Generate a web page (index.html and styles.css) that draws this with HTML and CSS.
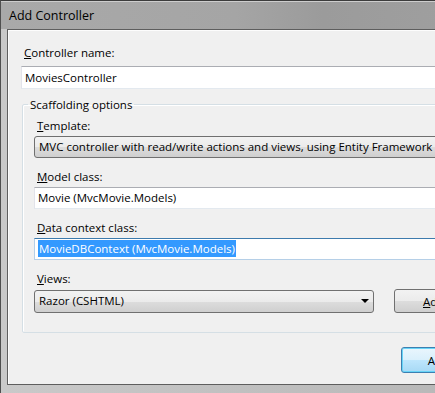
FILE: index.html
```html
<!DOCTYPE html>
<html lang="en">
<head>
    <meta charset="UTF-8">
    <title>Add Controller</title>
    <link rel="stylesheet" href="styles.css">
</head>
<body>
    <div class="window">
        <div class="titlebar">Add Controller</div>
        <div class="client">
            <label class="field-label"><u>C</u>ontroller name:</label>
            <div class="textbox">MoviesController</div>

            <fieldset class="group">
                <legend>Scaffolding options</legend>

                <label class="field-label"><u>T</u>emplate:</label>
                <div class="combo">MVC controller with read/write actions and views, using Entity Framework</div>

                <label class="field-label gap"><u>M</u>odel class:</label>
                <div class="textbox small">Movie (MvcMovie.Models)</div>

                <label class="field-label gap"><u>D</u>ata context class:</label>
                <div class="textbox small focused"><span class="selected">MovieDBContext (MvcMovie.Models)</span></div>

                <label class="field-label gap"><u>V</u>iews:</label>
                <div class="views-row">
                    <div class="combo views">
                        <span>Razor (CSHTML)</span>
                        <span class="arrow"></span>
                    </div>
                    <button class="btn wide"><u>A</u>dvanced Options...</button>
                </div>
            </fieldset>

            <div class="actions">
                <button class="btn default">Add</button>
                <button class="btn">Cancel</button>
            </div>
        </div>
    </div>
</body>
</html>
```

FILE: styles.css
```css
html, body {
    margin: 0;
    padding: 0;
    overflow: hidden;
    background-color: #8c8c8c;
}
body {
    font-family: "Open Sans", "Noto Sans", sans-serif;
    font-size: 11.5px;
    color: #000;
}
.window {
    width: 580px;
    height: 392px;
    padding: 0 0 0 6px;
    border-top: 1px solid #3c3c3c;
    border-left: 1px solid #4f4f4f;
    background: linear-gradient(to right, #c9c9c9, #b3b3b3);
    display: flex;
    flex-direction: column;
}
.titlebar {
    height: 27px;
    line-height: 27px;
    margin-left: -6px;
    padding-left: 8px;
    font-size: 12.5px;
    background: linear-gradient(to right, #a9a9a9 0%, #a5a5a5 40%, #9b9b9b 55%, #a3a3a3 100%);
    border-top: 1px solid #cdcdcd;
}
.client {
    flex: 1;
    background-color: #f0f0f0;
    border: 1px solid #5e5e5e;
    box-shadow: inset 1px 1px 0 #fdfdfd;
    padding: 15px 0 0 13px;
    margin-bottom: 8px;
}
.field-label {
    display: block;
    height: 15px;
    line-height: 15px;
    padding-left: 3px;
    margin-bottom: 6px;
}
.textbox {
    height: 21px;
    line-height: 21px;
    padding-left: 3px;
    background-color: #fff;
    border: 1px solid #e3e9ef;
    border-top-color: #abadb3;
    border-left-color: #e2e3ea;
}
.group {
    margin: 8px 0 0 1px;
    padding: 6px 0 19px 11px;
    border: 1px solid #d5dfe5;
    box-shadow: inset 1px 1px 0 #fff;
    border-radius: 2px;
}
.group legend {
    margin-left: -6px;
    padding: 0 2px;
    line-height: 15px;
}
.group .field-label {
    margin-bottom: 3px;
}
.group .field-label.gap {
    margin-top: 11px;
}
.textbox.small {
    height: 20px;
    line-height: 20px;
}
.textbox.focused {
    border-color: #b5cfe7;
    border-top-color: #3d7bad;
}
.selected {
    background-color: #3399ff;
    color: #fff;
    padding: 1px 1px;
}
.combo {
    height: 20px;
    line-height: 20px;
    padding-left: 4px;
    border: 1px solid #707070;
    border-radius: 3px;
    background: linear-gradient(#f2f2f2, #ebebeb 50%, #dddddd 50%, #cfcfcf);
}
.views-row {
    display: flex;
    align-items: center;
    gap: 20px;
    margin-top: 1px;
}
.combo.views {
    flex-shrink: 0;
    width: 330px;
    height: 21px;
    display: flex;
    justify-content: space-between;
    align-items: center;
    padding-right: 4px;
}
.arrow {
    width: 0;
    height: 0;
    border-left: 4px solid transparent;
    border-right: 4px solid transparent;
    border-top: 4px solid #000;
}
.btn {
    font-family: inherit;
    font-size: 11.5px;
    height: 24px;
    padding: 0 10px;
    border: 1px solid #707070;
    border-radius: 3px;
    background: linear-gradient(#f2f2f2, #ebebeb 50%, #dddddd 50%, #cfcfcf);
    color: #000;
}
.btn.wide {
    flex-shrink: 0;
    white-space: nowrap;
    padding: 0 26px 0 28px;
}
.actions {
    display: flex;
    gap: 7px;
    margin-top: 14px;
    padding-left: 380px;
}
.btn.default {
    width: 75px;
    height: 26px;
    border-color: #3c7fb1;
    box-shadow: inset 0 0 0 1px #68d4f7;
    background: linear-gradient(#eaf6fd, #d9f0fc 50%, #bee6fd 50%, #a7d9f5);
}
```
